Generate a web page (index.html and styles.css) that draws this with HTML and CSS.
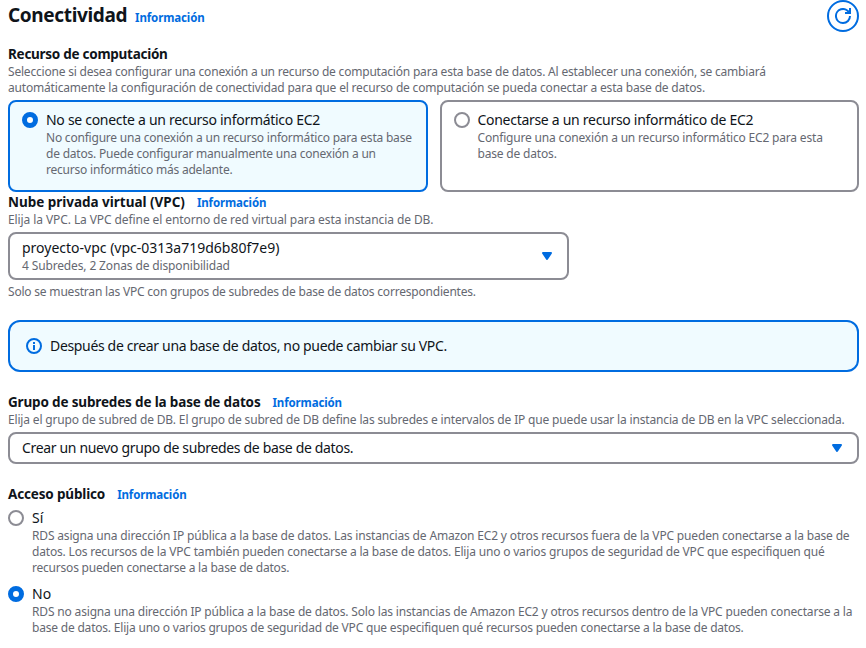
FILE: index.html
```html
<!DOCTYPE html>
<html lang="es">
<head>
<meta charset="utf-8">
<title>Conectividad</title>
<link rel="stylesheet" href="styles.css">
</head>
<body>
<main class="panel">
  <header class="header">
    <h2>Conectividad</h2><a class="info">Información</a>
    <button class="refresh" aria-label="Actualizar"><svg width="16" height="16" viewBox="0 0 16 16"><path d="M10 5h5V0"/><path d="M15 8a6.957 6.957 0 0 1-7 7 7 7 0 1 1 6.300-10"/></svg></button>
  </header>

  <section class="compute">
    <h3 class="t27">Recurso de computación</h3>
    <p class="desc">Seleccione si desea configurar una conexión a un recurso de computación para esta base de datos. Al establecer una conexión, se cambiará<br><span class="t18">automáticamente la configuración de conectividad para que el recurso de computación se pueda conectar a esta base de datos.</span></p>
    <div class="tiles">
      <label class="tile selected"><span class="radio on"></span><span class="body"><span class="label t29">No se conecte a un recurso informático EC2</span><span class="desc t21">No configure una conexión a un recurso informático para esta base<br>de datos. Puede configurar manualmente una conexión a un<br>recurso informático más adelante.</span></span></label>
      <label class="tile"><span class="radio"></span><span class="body"><span class="label t29">Conectarse a un recurso informático de EC2</span><span class="desc t18">Configure una conexión a un recurso informático EC2 para esta<br>base de datos.</span></span></label>
    </div>
  </section>

  <section class="vpc">
    <div class="title"><h3 class="t02">Nube privada virtual (VPC)</h3><a class="info">Información</a></div>
    <p class="desc t09">Elija la VPC. La VPC define el entorno de red virtual para esta instancia de DB.</p>
    <div class="select vpc-select"><div><div class="label">proyecto-vpc (vpc-0313a719d6b80f7e9)</div><div class="desc t14">4 Subredes, 2 Zonas de disponibilidad</div></div><svg class="caret" width="16" height="16" viewBox="0 0 16 16"><path d="M4 5h8l-4 6-4-6z"/></svg></div>
    <p class="desc hint">Solo se muestran las VPC con grupos de subredes de base de datos correspondientes.</p>
  </section>

  <div class="alert"><svg width="16" height="16" viewBox="0 0 16 16"><circle cx="8" cy="8" r="7"/><path d="M8 12V7M8 6V4"/></svg><span class="t33">Después de crear una base de datos, no puede cambiar su VPC.</span></div>

  <section class="subnet">
    <div class="title"><h3>Grupo de subredes de la base de datos</h3><a class="info">Información</a></div>
    <p class="desc t16">Elija el grupo de subred de DB. El grupo de subred de DB define las subredes e intervalos de IP que puede usar la instancia de DB en la VPC seleccionada.</p>
    <div class="select subnet-select"><div class="label t33">Crear un nuevo grupo de subredes de base de datos.</div><svg class="caret" width="16" height="16" viewBox="0 0 16 16"><path d="M4 5h8l-4 6-4-6z"/></svg></div>
  </section>

  <section class="access">
    <div class="title"><h3>Acceso público</h3><a class="info">Información</a></div>
    <label class="option"><span class="radio"></span><span class="body"><span class="label">Sí</span><span class="desc t18"><span class="t16">RDS asigna una dirección IP pública a la base de datos. Las instancias de Amazon EC2 y otros recursos fuera de la VPC pueden conectarse a la base de</span><br>datos. Los recursos de la VPC también pueden conectarse a la base de datos. Elija uno o varios grupos de seguridad de VPC que especifiquen qué<br><span class="t21">recursos pueden conectarse a la base de datos.</span></span></span></label>
    <label class="option"><span class="radio on"></span><span class="body"><span class="label">No</span><span class="desc"><span class="t16">RDS no asigna una dirección IP pública a la base de datos. Solo las instancias de Amazon EC2 y otros recursos dentro de la VPC pueden conectarse a la</span><br>base de datos. Elija uno o varios grupos de seguridad de VPC que especifiquen qué recursos pueden conectarse a la base de datos.</span></span></label>
  </section>
</main>
</body>
</html>
```
FILE: styles.css
```css
* { box-sizing: border-box; }
body { margin: 0; background: #fff; color: #0f141a; font: 14px/20px "Noto Sans", sans-serif; overflow: hidden; }
h2, h3, p { margin: 0; }
.panel { width: 866px; height: 648px; padding: 0 7px 0 8px; }
.header { display: flex; align-items: center; height: 32px; }
h2 { font-size: 19px; line-height: 24px; font-weight: 700; letter-spacing: -0.36px; padding-bottom: 2px; }
h3 { font-size: 13.5px; line-height: 18px; font-weight: 700; letter-spacing: -0.16px; }
.info { color: #006ce0; font-size: 11.5px; line-height: 18px; font-weight: 700; letter-spacing: -0.13px; margin-left: 12px; }
.title .info { padding-top: 1px; }
.header .info { margin-left: 8px; padding-top: 3px; }
.refresh { margin-left: auto; width: 32px; height: 32px; border: 2px solid #006ce0; border-radius: 50%; background: #fff; padding: 0; display: flex; align-items: center; justify-content: center; }
.refresh svg, .alert svg { fill: none; stroke: #006ce0; stroke-width: 2; }
.desc { display: block; font-size: 12px; line-height: 16px; letter-spacing: -0.2px; color: #656871; white-space: nowrap; }
.label { display: block; white-space: nowrap; }
.title { display: flex; align-items: flex-start; height: 18px; }
.compute { padding-top: 13px; }
.compute > .desc { padding-top: 1px; }
.tiles { display: grid; grid-template-columns: repeat(2, minmax(0, 1fr)); gap: 12px; margin-top: 4px; }
.tile { display: flex; gap: 8px; height: 92px; border: 2px solid #8c8c94; border-radius: 8px; padding: 8px 12px; }
.tile.selected { border-color: #006ce0; background: #f0fbff; }
.radio { flex: none; width: 16px; height: 16px; margin-top: 2px; border: 2px solid #8c8c94; border-radius: 50%; background: #fff; }
.radio.on { border: 5px solid #006ce0; }
.vpc { padding-top: 1px; }
.vpc > .title + .desc, .subnet > .desc { padding-top: 1px; }
.select { display: flex; align-items: center; justify-content: space-between; border: 2px solid #8c8c94; border-radius: 8px; padding: 0 12px; }
.vpc-select { width: 561px; height: 48px; margin-top: 4px; }
.caret { fill: #006ce0; stroke: #006ce0; stroke-width: 2; stroke-linejoin: round; }
.hint { margin-top: 4px; }
.alert { display: flex; align-items: center; gap: 8px; height: 52px; margin-top: 20px; padding: 0 16px; border: 2px solid #006ce0; border-radius: 12px; background: #f0fbff; }
.subnet { padding-top: 21px; }
.subnet-select { height: 32px; margin-top: 4px; }
.access { padding-top: 21px; }
.option { display: flex; gap: 8px; margin-top: 5px; }
.option + .option { margin-top: 8px; }

/* Tracking adjustments */
.t02 { letter-spacing: -0.02px; }
.t09 { letter-spacing: -0.09px; }
.t14 { letter-spacing: -0.14px; }
.t16 { letter-spacing: -0.165px; }
.t18 { letter-spacing: -0.18px; }
.t21 { letter-spacing: -0.21px; }
.t27 { letter-spacing: -0.27px; }
.t29 { letter-spacing: -0.29px; }
.t33 { letter-spacing: -0.34px; }
```
